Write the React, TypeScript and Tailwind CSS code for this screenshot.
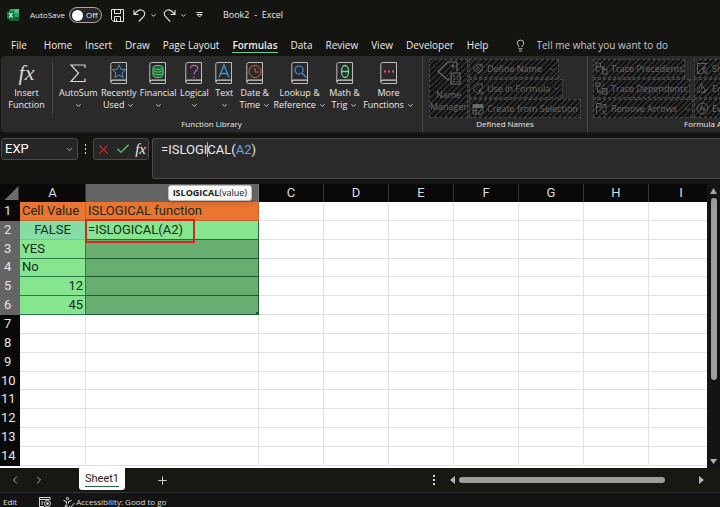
import React, { useState } from 'react';
import { Check, ChevronDown, ChevronLeft, ChevronRight, Lightbulb, Plus, X } from 'lucide-react';

type Glyph = 'star' | 'coins' | 'question' | 'letter' | 'clock' | 'search' | 'theta' | 'dots';

interface LibraryItem {
  lines: string[];
  glyph: Glyph | 'sigma';
}

const TABS = ['File', 'Home', 'Insert', 'Draw', 'Page Layout', 'Formulas', 'Data', 'Review', 'View', 'Developer', 'Help'];

const LIBRARY: LibraryItem[] = [
  { lines: ['AutoSum', ''], glyph: 'sigma' },
  { lines: ['Recently', 'Used'], glyph: 'star' },
  { lines: ['Financial', ''], glyph: 'coins' },
  { lines: ['Logical', ''], glyph: 'question' },
  { lines: ['Text', ''], glyph: 'letter' },
  { lines: ['Date &', 'Time'], glyph: 'clock' },
  { lines: ['Lookup &', 'Reference'], glyph: 'search' },
  { lines: ['Math &', 'Trig'], glyph: 'theta' },
  { lines: ['More', 'Functions'], glyph: 'dots' },
];

const COLUMNS = ['A', 'B', 'C', 'D', 'E', 'F', 'G', 'H', 'I'];
const ROWS = Array.from({ length: 14 }, (_, i) => i + 1);

const CELLS: Record<string, string> = {
  A1: 'Cell Value',
  B1: 'ISLOGICAL function',
  A2: 'FALSE',
  B2: '=ISLOGICAL(A2)',
  A3: 'YES',
  A4: 'No',
  A5: '12',
  A6: '45',
};

// Unavailable commands while a cell is being edited
const HATCH =
  'border border-dashed border-[#4c4c4c] bg-[repeating-linear-gradient(135deg,#101010_0px,#101010_2px,#2a2a2a_2px,#2a2a2a_4px)] text-[#6a6a6a]';

const cellStyle = (col: string, row: number) => {
  const border = 'border-r border-b ';
  if (col === 'A' || col === 'B') {
    if (row === 1) return border + 'border-[#c0642c] bg-[#ea7430]';
    if (row === 2 && col === 'A') return border + 'border-[#7fb4dd] bg-[#86dca4] text-center';
    if (row === 2) return border + 'border-[#1e6a3a] bg-[#86e58f]';
    if (row <= 6 && col === 'A') return border + 'border-[#2c7a45] bg-[#86e58f]' + (row > 4 ? ' text-right' : '');
    if (row <= 6) return border + 'border-[#1e5a30] bg-[#68ae70]';
  }
  return border + 'border-[#e1e1e1] bg-white';
};

const BookGlyph: React.FC<{ glyph: Glyph }> = ({ glyph }) => {
  switch (glyph) {
    case 'star':
      return <path d="M9 2.8l1.9 4.5 4.8.4-3.6 3.1 1.1 4.7L9 13l-4.2 2.500 1.100-4.700-3.600-3.100 4.800-.4z" stroke="#3f93d6" />;
    case 'coins':
      return (
        <g stroke="#5fd07c" fill="#1f5c34">
          <path d="M4 5.500v8c0 1 2.200 2 5 2s5-1 5-2v-8" />
          <path d="M4 8c0 1 2.200 2 5 2s5-1 5-2M4 10.700c0 1 2.200 2 5 2s5-1 5-2" fill="none" />
          <ellipse cx="9" cy="5.500" rx="5" ry="2" />
        </g>
      );
    case 'question':
      return <path d="M5.500 6.500c0-2 1.500-3.200 3.500-3.200s3.700 1 3.700 3C12.700 9 9 9.200 9 12.500M9 14.500V16" stroke="#c45fc9" strokeWidth="1.2" />;
    case 'letter':
      return <path d="M4 15.500L9 3l5 12.500M5.700 11.500h6.600" stroke="#3f93d6" strokeWidth="1.3" />;
    case 'clock':
      return (
        <g stroke="#dd5b58">
          <circle cx="9" cy="9.500" r="6" />
          <path d="M9 6v4h3.500" />
        </g>
      );
    case 'search':
      return (
        <g stroke="#3f93d6" strokeWidth="1.2">
          <circle cx="8" cy="8" r="4" />
          <path d="M11 11l4.500 4.500" />
        </g>
      );
    case 'theta':
      return (
        <g stroke="#6fdc86" strokeWidth="1.3">
          <ellipse cx="9" cy="9.500" rx="3.500" ry="6" />
          <path d="M5.500 9.500h7" />
        </g>
      );
    default:
      return <path d="M4 9.500h2M8 9.500h2M12 9.500h2" stroke="#dd5b58" strokeWidth="2" />;
  }
};

const LibraryIcon: React.FC<{ glyph: LibraryItem['glyph'] }> = ({ glyph }) => {
  if (glyph === 'sigma') {
    return (
      <svg className="h-[22px] w-[18px]" viewBox="0 0 18 22" fill="none" stroke="#d8d8d8" strokeWidth="1.2">
        <path d="M16 6V3H2l7.500 8L2 19.500h14v-3" />
      </svg>
    );
  }
  return (
    <svg className="h-[22px] w-[18px]" viewBox="0 0 18 22" fill="none">
      <path d="M3 .5h13.500v21H2.500A1.800 1.800 0 0 1 .8 20V2.500C.8 1.200 1.600.5 3 .5z" stroke="#bdbdbd" />
      <path d="M.8 19.500c.3-1 1-1.300 2-1.300h13.700" stroke="#d0d0d0" strokeWidth="1.2" />
      <BookGlyph glyph={glyph} />
    </svg>
  );
};

const Caret = () => <ChevronDown className="inline size-[7px] shrink-0" strokeWidth={3} />;

const TagIcon = () => (
  <svg className="size-[12px] shrink-0" viewBox="0 0 24 24" fill="none" stroke="currentColor" strokeWidth="1.8">
    <path d="M2 12L12 2l8 1 1 8-8 9z" />
    <circle cx="17" cy="6" r="1" />
    <path d="M7 12l6-5M10 15l6-5M12 22l10-9" />
  </svg>
);

const NameManagerIcon = () => (
  <svg className="size-6" viewBox="0 0 24 24" fill="none" stroke="currentColor" strokeWidth="1.2">
    <path d="M12 18l-1 1L1 10.500 10.500 1H19l1 1v8" />
    <circle cx="16" cy="5" r="1" />
    <path d="M14 12h9v11h-9zM16 15h2M19.500 15H21M16 18h2M19.500 18H21M16 20.500h2M19.500 20.500H21" />
  </svg>
);

const UseInFormulaIcon = () => (
  <svg className="size-[12px] shrink-0" viewBox="0 0 24 24" fill="none" stroke="currentColor" strokeWidth="1.8">
    <path d="M10 20L2 12 12 2h8l1 7" />
    <path d="M19 11c-3-1-3 2-4 6s-1 6-4 5M12 15h6M17 17l5 6M22 17l-5 6" />
  </svg>
);

const SelectionIcon = () => (
  <svg className="size-[12px] shrink-0" viewBox="0 0 24 24" fill="none" stroke="currentColor" strokeWidth="1.8">
    <path d="M2 3h20v6H2z" fill="currentColor" />
    <path d="M2 9v13h9M8 9v13M2 15h9M22 9v3M13 20l6-8 4 4-6 7h-4z" />
  </svg>
);

const TraceIcon = ({ variant }: { variant: 'precedents' | 'dependents' | 'remove' }) => (
  <svg className="size-[13px] shrink-0" viewBox="0 0 26 26" fill="none" stroke="currentColor" strokeWidth="1.8">
    {variant === 'precedents' && <path d="M2 2h9v8H2zM2 10v8h7M15 15h9v9h-9zM11 8l7 5M18 8v5h-5" />}
    {variant === 'dependents' && <path d="M2 2h8v7H2zM14 13h10v11H14zM14 18h10M5 12v8h6M8 17l3 3-3 3M13 9l6-5" />}
    {variant === 'remove' && <path d="M3 24V3h9v7H3M8 18l14-12M22 12V5h-7M15 17l8 8M23 17l-8 8" />}
  </svg>
);

const AuditIcon = ({ variant }: { variant: 'show' | 'error' | 'evaluate' }) => (
  <svg className="size-[13px] shrink-0" viewBox="0 0 26 26" fill="none" stroke="currentColor" strokeWidth="1.8">
    {variant === 'show' && <path d="M2 3h21M3 3v20h6M3 23L20 4M20 10c-4-1-4 3-5 7s-1 6-4 6M12 14h7M17 18l6 6M23 18l-6 6" />}
    {variant === 'error' && <path d="M2 20L11 3l9 17zM11 9v6M14 22l10-8" />}
    {variant === 'evaluate' && (
      <>
        <circle cx="13" cy="13" r="11" />
        <path d="M13 7c-3-1-3 3-4 6s-1 6-3 5M8 12h5M13 11l6 7M19 11l-6 7" />
      </>
    )}
  </svg>
);

const TitleBar: React.FC = () => {
  const [autoSave, setAutoSave] = useState(false);

  return (
    <header className="flex h-[30px] items-center whitespace-nowrap pl-[7px] text-[9px]">
      <svg className="size-[12px]" viewBox="0 0 12 12">
        <rect x="2.500" width="9.500" height="12" rx="1" fill="#21a366" />
        <path d="M7.500 0H12v4H7.500z" fill="#4fc78a" />
        <path d="M2.500 8H12v4H2.500z" fill="#185c37" />
        <rect y="2.500" width="7.500" height="7.500" rx=".8" fill="#107c41" />
        <path d="M2.200 4l3.200 4.500M5.400 4L2.200 8.500" stroke="#fff" strokeWidth="1.1" />
      </svg>
      <label className="ml-[11px] flex items-center gap-1 text-[8px]">
        AutoSave
        <span className="relative flex h-4 w-[33px] items-center rounded-full border border-[#a8a8a8] bg-[#262626]">
          <input
            type="checkbox"
            role="switch"
            checked={autoSave}
            onChange={e => setAutoSave(e.target.checked)}
            className="absolute inset-0 appearance-none rounded-full"
          />
          <span className="ml-[2px] size-[11px] rounded-full bg-white"></span>
          <span className="ml-[3px]">Off</span>
        </span>
      </label>
      <button aria-label="Save" className="ml-[9px]">
        <svg className="size-[13px]" viewBox="0 0 13 13" fill="none" stroke="#e4e4e4">
          <path d="M.5.5h12v12h-10l-2-2zM3.500.5v4h6v-4M3.500 12.500v-5h6v5M5.500 9.500v3" />
        </svg>
      </button>
      <button aria-label="Undo" className="ml-[9px] flex items-center gap-1">
        <svg className="size-[13px]" viewBox="0 0 13 13" fill="none" stroke="#e4e4e4" strokeWidth="1.1">
          <path d="M1 1v4.500h4.500M1 5.500L4.500 2C7 .2 10 .6 11.300 3c.8 1.800.3 3.500-.8 4.700l-4.700 4.800" />
        </svg>
        <Caret />
      </button>
      <button aria-label="Redo" className="ml-[6px] flex items-center gap-1">
        <svg className="size-[13px]" viewBox="0 0 13 13" fill="none" stroke="#e4e4e4" strokeWidth="1.1">
          <path d="M12 1v4.500H7.500M12 5.500L8.500 2C6 .2 3 .6 1.700 3c-.8 1.800-.3 3.500.8 4.700l4.700 4.800" />
        </svg>
        <Caret />
      </button>
      <button aria-label="Customize Quick Access Toolbar" className="ml-[9px]">
        <svg className="h-[6px] w-[7px]" viewBox="0 0 7 6" fill="none" stroke="#e4e4e4">
          <path d="M.5.5h6M1 2.500h5L3.500 5z" />
        </svg>
      </button>
      <h1 className="ml-5 whitespace-pre">Book2  -  Excel</h1>
    </header>
  );
};

const TabBar: React.FC = () => {
  const [active, setActive] = useState('Formulas');

  return (
    <nav className="flex h-[26px] items-center gap-[13px] whitespace-nowrap pt-1 pl-[11px] text-[10px]">
      {TABS.map(tab => (
        <button
          key={tab}
          onClick={() => setActive(tab)}
          className={`border-b leading-[14px] first:mr-1 ${tab === active ? 'border-[#6fcf97] font-semibold' : 'border-transparent'}`}
        >
          {tab}
        </button>
      ))}
      <label className="ml-3 flex flex-1 items-center gap-[10px]">
        <Lightbulb className="size-[13px]" strokeWidth={1.5} />
        <input
          aria-label="Tell me what you want to do"
          placeholder="Tell me what you want to do"
          className="min-w-0 flex-1 bg-transparent outline-none placeholder:text-[#c8c8c8]"
        />
      </label>
    </nav>
  );
};

const Ribbon: React.FC = () => (
  <section className="ml-px flex h-[77px] overflow-hidden whitespace-nowrap rounded-l-[4px] border-b border-[#1c1c1c] bg-[#2a2a2a] text-[9px] leading-3">
    <div className="flex w-[422px] shrink-0 flex-col border-r border-[#4a4a4a]">
      <div className="flex h-[62px] pt-[6px]">
        <button className="mb-1 flex w-[52px] flex-col items-center border-r border-[#4a4a4a]">
          <span className="h-[25px] font-['Liberation_Serif',serif] text-[22px] leading-[22px] text-[#d8d8d8] italic">fx</span>
          <span>Insert</span>
          <span>Function</span>
        </button>
        <div className="flex flex-1 justify-between pr-2 pl-[6px]">
          {LIBRARY.map(item => (
            <button key={item.lines[0]} className="flex min-w-[24px] flex-col items-center">
              <span className="h-[25px]">
                <LibraryIcon glyph={item.glyph} />
              </span>
              <span>{item.lines[0]}</span>
              <span className="flex h-3 items-center gap-[3px]">
                {item.lines[1]}
                <Caret />
              </span>
            </button>
          ))}
        </div>
      </div>
      <p className="text-center text-[8px]">Function Library</p>
    </div>

    <div className="flex w-[165px] shrink-0 flex-col border-r border-[#4a4a4a]">
      <div className="flex h-[62px] gap-px pt-[3px] pl-[6px]">
        <button disabled className={`flex h-[59px] w-[39px] flex-col items-center pt-px ${HATCH}`}>
          <NameManagerIcon />
          <span className="pt-1">Name</span>
          <span>Manager</span>
        </button>
        <div className="flex flex-col items-start gap-px">
          <button disabled className={`flex h-[19px] items-center gap-[3px] px-[2px] ${HATCH}`}>
            <TagIcon />
            Define Name
            <span className="pl-1"><Caret /></span>
          </button>
          <button disabled className={`flex h-[19px] items-center gap-[3px] px-[2px] ${HATCH}`}>
            <UseInFormulaIcon />
            Use in Formula
            <Caret />
          </button>
          <button disabled className={`flex h-[19px] items-center gap-[3px] px-[2px] ${HATCH}`}>
            <SelectionIcon />
            Create from Selection
          </button>
        </div>
      </div>
      <p className="text-center text-[8px]">Defined Names</p>
    </div>

    <div className="flex w-[240px] shrink-0 flex-col">
      <div className="flex h-[62px] gap-px pt-[3px] pl-[5px]">
        <div className="flex flex-col items-start gap-px">
          <button disabled className={`flex h-[19px] items-center gap-[3px] px-px ${HATCH}`}>
            <TraceIcon variant="precedents" />
            Trace Precedents
          </button>
          <button disabled className={`flex h-[19px] items-center gap-[3px] px-px ${HATCH}`}>
            <TraceIcon variant="dependents" />
            Trace Dependents
          </button>
          <button disabled className={`flex h-[19px] items-center gap-[3px] px-px ${HATCH}`}>
            <TraceIcon variant="remove" />
            Remove Arrows
            <span className="pl-1"><Caret /></span>
          </button>
        </div>
        <div className="flex flex-col items-start gap-px">
          <button disabled className={`flex h-[19px] items-center gap-[3px] px-px ${HATCH}`}>
            <AuditIcon variant="show" />
            Show Formulas
          </button>
          <button disabled className={`flex h-[19px] items-center gap-[3px] px-px ${HATCH}`}>
            <AuditIcon variant="error" />
            Error Checking
          </button>
          <button disabled className={`flex h-[19px] items-center gap-[3px] px-px ${HATCH}`}>
            <AuditIcon variant="evaluate" />
            Evaluate Formula
          </button>
        </div>
      </div>
      <p className="pl-24 text-[8px]">Formula Auditing</p>
    </div>
  </section>
);

const FormulaBar: React.FC = () => (
  <section className="flex items-start py-[5px] pl-px font-[Roboto,sans-serif] text-[13px]">
    <div className="relative w-[77px]">
      <select
        aria-label="Name Box"
        className="block h-[22px] w-full appearance-none rounded-[3px] border border-[#4a4a4a] bg-[#262626] pl-[3px] text-white"
      >
        <option>EXP</option>
      </select>
      <ChevronDown className="pointer-events-none absolute top-[7px] right-1 size-[9px] text-[#d0d0d0]" />
    </div>
    <svg className="h-[22px] w-[15px]" viewBox="0 0 15 22" fill="#d8d8d8">
      <path d="M7 6h1v2H7zM7 10h1v2H7zM7 14h1v2H7z" />
    </svg>
    <div className="flex h-[22px] w-[56px] items-center justify-between rounded-[3px] border border-[#4a4a4a] bg-[#262626] px-[2px]">
      <button aria-label="Cancel">
        <X className="size-[15px] text-[#d8504d]" strokeWidth={1.6} />
      </button>
      <button aria-label="Enter">
        <Check className="size-[16px] text-[#5fcf7f]" strokeWidth={1.6} />
      </button>
      <button aria-label="Insert Function" className="font-['Liberation_Serif',serif] text-[15px] leading-4 italic">
        fx
      </button>
    </div>
    <div
      role="textbox"
      aria-label="Formula Bar"
      contentEditable
      suppressContentEditableWarning
      className="ml-[3px] h-[41px] flex-1 rounded-l-[3px] border border-r-0 border-[#4a4a4a] bg-[#2a2a2a] pt-[3px] pl-2 leading-4 outline-none"
    >
      =ISLOGI<span className="-mr-px border-l border-[#b0b0b0]"></span>CAL(<span className="text-[#64a8e8]">A2</span>)
    </div>
  </section>
);

const Sheet: React.FC = () => (
  <section className="flex">
    <div className="min-w-0 flex-1 overflow-hidden bg-white">
      <table className="h-[282px] w-[calc(100%+7px)] table-fixed border-separate border-spacing-0 font-[Roboto,sans-serif] text-[13px] leading-4 text-[#1c2a1e]">
        <colgroup>
          <col className="w-5" />
          <col className="w-[66px]" />
          <col className="w-[173px]" />
          {COLUMNS.slice(2, 8).map(col => (
            <col key={col} className="w-[65px]" />
          ))}
          <col />
        </colgroup>
        <thead>
          <tr className="h-[18px] bg-[#090909] text-[#dcdcdc]">
            <th aria-label="Select All" className="p-0">
              <svg className="ml-auto size-[16px]" viewBox="0 0 16 16" fill="#6c6c6c">
                <path d="M14.500 1v14H.5z" />
              </svg>
            </th>
            {COLUMNS.map(col => (
              <th
                key={col}
                className={`relative border-r p-0 font-normal ${col === 'B' ? 'border-[#7a7a7a] bg-[#646464]' : 'border-[#333333]'}`}
              >
                {col === 'B' ? (
                  <span
                    role="tooltip"
                    className="absolute top-px right-[6px] z-10 rounded-[3px] border border-[#bdbdbd] bg-[#f7f7f7] px-1 font-['Open_Sans',sans-serif] text-[9px] leading-[14px] text-[#222222] shadow-md"
                  >
                    <b>ISLOGICAL</b>(value)
                  </span>
                ) : (
                  col
                )}
              </th>
            ))}
          </tr>
        </thead>
        <tbody>
          {ROWS.map(row => (
            <tr key={row} className="h-[18px] align-middle">
              <th
                scope="row"
                className={`border-b py-0 pr-0 text-left font-normal text-[#e4e4e4] ${row > 1 && row < 7 ? 'border-[#646464] bg-[#646464]' : 'border-[#090909] bg-[#090909]'} ${row < 10 ? 'pl-[4px]' : 'pl-px'}`}
              >
                {row}
              </th>
              {COLUMNS.map(col => (
                <td key={col} className={`relative whitespace-nowrap px-[2px] py-0 ${cellStyle(col, row)}`}>
                  {CELLS[`${col}${row}`]}
                  {col === 'B' && row === 2 && (
                    <span className="absolute -top-[2px] -left-px z-10 h-[24px] w-[110px] border-2 border-[#d4281e]"></span>
                  )}
                  {col === 'B' && row === 6 && (
                    <span className="absolute -right-px -bottom-px size-[3px] bg-[#14602f]"></span>
                  )}
                </td>
              ))}
            </tr>
          ))}
        </tbody>
      </table>
      <div className="h-[2px] bg-white"></div>
    </div>
    <div className="flex w-[13px] flex-col items-center gap-1 bg-[#141414] py-1" role="scrollbar" aria-controls="root" aria-valuenow={0}>
      <svg className="h-[6px] w-[7px]" viewBox="0 0 7 6" fill="#a5a5a5">
        <path d="M3.500 0L7 6H0z" />
      </svg>
      <div className="h-[182px] w-[6px] rounded-full bg-[#9d9d9d]"></div>
      <svg className="mt-auto h-[5px] w-[7px]" viewBox="0 0 7 5" fill="#b5b5b5">
        <path d="M3.500 5L7 0H0z" />
      </svg>
    </div>
  </section>
);

const SheetTabs: React.FC = () => (
  <section className="flex h-[24px] items-center bg-[#161811]">
    <button aria-label="Previous sheet" className="ml-[9px]">
      <ChevronLeft className="size-[12px] text-[#b0b0b0]" />
    </button>
    <button aria-label="Next sheet" className="ml-3">
      <ChevronRight className="size-[12px] text-[#b0b0b0]" />
    </button>
    <button className="ml-[34px] h-[22px] self-start rounded-b-[3px] bg-white px-[6px] font-[Roboto,sans-serif] text-[11px] text-[#1c1c1c]">
      <span className="block border-b border-[#1e6a3a] leading-[15px]">Sheet1</span>
    </button>
    <button aria-label="New sheet" className="ml-[31px]">
      <Plus className="size-[13px] text-[#d0d0d0]" strokeWidth={1.8} />
    </button>
    <div className="ml-auto flex w-[290px] items-center">
      <svg className="h-[10px] w-[6px]" viewBox="0 0 6 10" fill="#d8d8d8">
        <path d="M3 0h2v2H3zM3 4h2v2H3zM3 8h2v2H3z" />
      </svg>
      <svg className="ml-[14px] h-[8px] w-[5px]" viewBox="0 0 5 8" fill="#b5b5b5">
        <path d="M0 4l5-4v8z" />
      </svg>
      <div className="ml-1 h-[6px] w-[206px] rounded-full bg-[#9d9d9d]"></div>
      <svg className="mr-4 ml-auto h-[8px] w-[5px]" viewBox="0 0 5 8" fill="#b5b5b5">
        <path d="M5 4L0 0v8z" />
      </svg>
    </div>
  </section>
);

const StatusBar: React.FC = () => (
  <footer className="flex h-[15px] items-center border-t border-[#303030] bg-[#141414] pt-1 pl-[3px] text-[8px] leading-[10px] text-[#dcdcdc]">
    <span>Edit</span>
    <svg className="ml-[22px] h-[10px] w-[12px]" viewBox="0 0 12 10" fill="none" stroke="#dcdcdc">
      <path d="M5 9.500H.5v-9H11V3M.5 2.500H10M2 5h2.500M2 7h2" />
      <circle cx="8.500" cy="6.500" r="3" />
      <circle cx="8.500" cy="6.500" r="1" fill="#dcdcdc" />
    </svg>
    <button className="ml-3 flex items-center gap-px">
      <svg className="h-[11px] w-[12px]" viewBox="0 0 12 11" fill="none" stroke="#dcdcdc">
        <circle cx="4.500" cy="1.500" r="1.200" />
        <path d="M.5 3.500l3 1v2L2 10.500l1 .2L4.500 8M8.500 3.500l-3 1v2M6 9l1.500 1.500L11.500 6" />
      </svg>
      Accessibility: Good to go
    </button>
  </footer>
);

const App: React.FC = () => {
  return (
    <div className="min-h-screen w-full overflow-hidden bg-[#141410] font-['Open_Sans',sans-serif] text-[#ebebeb]">
      <TitleBar />
      <TabBar />
      <Ribbon />
      <FormulaBar />
      <Sheet />
      <SheetTabs />
      <StatusBar />
    </div>
  );
};

export default App;
